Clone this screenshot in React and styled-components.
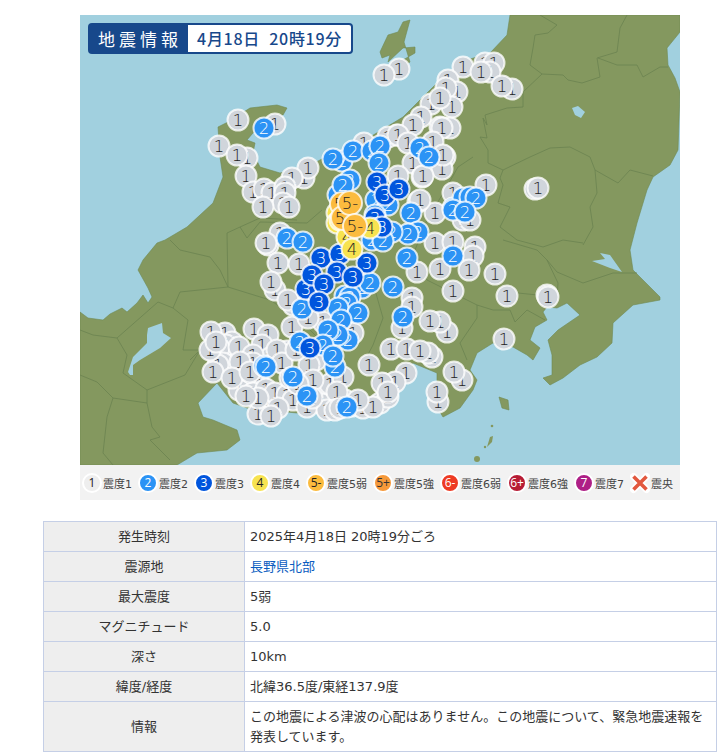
import React from 'react';
import styled, { createGlobalStyle } from 'styled-components';

const GlobalStyle = createGlobalStyle`
  html, body { margin: 0; padding: 0; background: #ffffff; overflow: hidden; }
  body { font-family: "DejaVu Sans", "Noto Sans CJK JP", sans-serif; color: #333333; font-size: 13px; }
`;

const COLORS = {
  '1': { bg: '#d0d5db', fg: '#222222' },
  '2': { bg: '#2b93f5', fg: '#ffffff' },
  '3': { bg: '#0055dd', fg: '#ffffff' },
  '4': { bg: '#f7e350', fg: '#222222' },
  '5-': { bg: '#fbbb3e', fg: '#222222' },
  '5+': { bg: '#f6993a', fg: '#333333' },
  '6-': { bg: '#ee3b23', fg: '#ffffff' },
  '6+': { bg: '#b71c35', fg: '#ffffff' },
  '7': { bg: '#ae1f86', fg: '#ffffff' },
};

const LAND = '80,312 88,318 103,320 110,314 122,308 127,312 137,303 143,295 148,303 152,297 148,288 138,270 143,260 157,243 165,240 187,227 213,203 223,177 220,157 218,127 228,122 250,108 277,105 287,108 283,115 265,120 253,133 247,140 255,143 253,153 260,167 280,173 307,167 333,153 367,147 370,137 403,117 437,83 467,60 490,53 507,35 510,15 680,15 680,32 667,48 668,65 675,78 680,92 678,150 670,165 653,177 647,190 637,223 630,250 633,270 660,297 660,300 633,305 613,323 612,343 597,357 580,365 563,378 550,385 543,378 552,375 552,355 548,340 558,330 580,315 567,303 557,308 547,307 543,312 547,320 535,327 530,340 540,348 533,360 527,355 513,347 493,343 477,353 470,370 477,380 473,390 460,408 443,417 437,407 437,373 413,363 403,370 377,393 347,413 297,413 247,408 233,403 217,383 198,403 203,417 213,420 237,430 240,440 227,450 197,453 177,465 80,465';

const SADO = '410,20 403,22 398,32 388,35 380,52 382,58 390,55 388,62 403,48 415,47 415,53 403,60 390,65 398,70 410,62 404,42';
const BIWA = '148,328 162,323 163,333 171,338 160,348 140,360 133,365 133,375 130,375 128,372 133,357 147,343 147,335';
const INAWASHIRO = '572,108 578,106 585,112 581,118 575,115';
const KASUMI = '592,261 605,259 600,253 610,255 622,272 610,268';
const OSHIMA = '499,397 508,400 509,410 502,408';
const NIIJIMA = '490,437 493,436 492,442 487,447';

const BORDERS = [
  '540,15 557,25 548,33 535,35 533,48 530,65 542,74 523,92 523,107 507,108 485,115 487,125 483,118 487,138 480,137 488,150 488,163 503,170',
  '542,74 563,75 568,80 582,83 600,77 597,58 617,52 620,28 627,15',
  '598,58 617,65 637,65 643,77 660,67 668,67',
  '503,170 530,157 550,148 570,147 590,157 595,170 618,183 630,170 653,176',
  '595,170 597,193 590,207 593,227 583,245',
  '503,170 500,178 503,185 498,203 510,207 500,227 517,240 543,247 563,240 583,243',
  '503,240 537,250 547,260 557,272 583,283 613,273 637,273',
  '547,260 558,283 557,297 543,307',
  '427,280 463,298 477,305 493,310 510,310 515,322 527,310 545,320',
  '477,305 477,318 460,343 467,360',
  '518,293 557,297',
  '473,157 458,167 445,190 427,220 415,250 427,280',
  '170,240 180,250 210,257 220,270 228,287 180,292 173,308 188,320 183,350 200,350 190,360',
  '158,302 173,308',
  '158,302 117,338 127,355 123,373 147,390 185,375 200,350',
  '80,375 97,382 113,398 147,403 147,390',
  '107,417 103,453 113,465',
  '113,398 107,417',
  '147,403 152,427 160,437 150,440 170,460',
  '93,335 117,338',
  '80,330 93,335',
  '228,287 227,233 240,227 247,238 260,222 307,223 322,210',
  '240,227 260,218 297,220',
  '375,290 383,318 373,345 365,360',
  '228,287 270,300 300,320 330,350 340,385 347,413',
];

const PINS = {
  '1': [
    [238,120],[275,124],[219,146],[247,158],[237,155],[246,176],[304,178],[308,168],[292,178],[253,192],[264,189],[272,193],[285,187],[285,193],[283,203],[289,207],[263,207],[364,143],
    [399,69],[384,75],[463,67],[485,63],[494,63],[490,72],[481,72],[512,89],[502,86],[448,80],[457,92],[446,88],[452,107],[431,104],[440,98],[421,117],[413,125],[440,127],[450,128],[442,128],[397,135],[388,137],[398,135],[408,143],[433,142],[445,157],[413,163],[442,169],[422,177],[398,176],[486,185],[535,189],[538,188],[453,193],[435,213],[418,202],[463,220],[470,220],[435,243],[453,242],[475,247],[420,200],[423,176],[443,155],
    [473,256],[440,269],[469,270],[495,274],[417,272],[453,291],[507,296],[547,295],[548,297],[412,298],[412,307],[447,332],[440,322],[430,321],[402,328],[391,349],[407,349],[432,357],[428,353],[420,351],[504,339],[462,380],[454,372],[438,402],[437,392],[406,373],[384,384],[395,382],[380,403],[388,397],
    [268,245],[280,233],[266,243],[278,263],[299,264],[275,290],[271,282],[293,305],[288,300],[225,333],[211,332],[254,329],[268,335],[292,327],[227,353],[223,350],[220,355],[228,368],[236,358],[232,342],[226,345],[219,348],[245,360],[262,345],[270,358],[239,347],[287,351],[277,350],[253,355],[223,363],[218,365],[213,372],[243,377],[253,363],[282,363],[316,360],[309,365],[260,385],[268,400],[280,402],[300,392],[318,395],[322,404],[330,384],[345,400],[352,406],[245,377],[239,390],[253,393],[266,389],[275,393],[287,395],[293,400],[278,408],[258,414],[271,416],[313,380],[343,377],[369,365],[337,392],[307,407],[327,410],[335,410],[363,408],[373,407],[382,383],[323,322],[353,333],[308,318],
    [210,350],[216,342],[240,362],[232,378],[250,372],[258,398],[246,396],[290,378],[298,384],[312,398],[340,408],[358,400],[388,392],[296,350],
  ],
  '2': [
    [264,128],[342,161],[333,159],[353,151],[372,151],[380,146],[379,163],[350,180],[338,195],[343,185],[420,148],[429,157],[411,213],[453,208],[463,198],[470,197],[476,198],[453,210],[465,212],
    [376,200],[388,205],[375,215],[385,232],[418,232],[408,234],[372,240],[392,232],[383,241],[407,258],[453,256],[287,238],[303,242],[393,287],[362,288],[370,283],[403,317],
    [302,309],[345,296],[350,297],[347,303],[338,308],[358,313],[341,320],[348,340],[338,335],[328,330],[323,345],[300,342],[335,367],[333,356],[264,366],[266,367],[293,377],[307,396],[347,407],
  ],
  '3': [
    [377,182],[385,195],[399,189],[375,218],[382,227],[321,258],[340,254],[367,263],[337,272],[353,277],[306,289],[312,275],[324,284],[319,302],[310,348],
  ],
  '4': [[337,213],[337,223],[340,220],[347,237],[370,228],[352,249]],
  '5-': [[342,204],[343,218],[350,203],[355,226]],
};

const LEGEND = [
  { level: '1', label: '震度1', dot: '#eeeeee' },
  { level: '2', label: '震度2' },
  { level: '3', label: '震度3' },
  { level: '4', label: '震度4' },
  { level: '5-', label: '震度5弱' },
  { level: '5+', label: '震度5強' },
  { level: '6-', label: '震度6弱' },
  { level: '6+', label: '震度6強' },
  { level: '7', label: '震度7' },
];

const S = {
  Page: styled.main`
    width: 674px;
    margin-left: 43px;
    padding-top: 15px;
  `,
  Figure: styled.figure`
    position: relative;
    width: 600px;
    margin: 0 auto;
  `,
  MapSvg: styled.svg`
    display: block;
    width: 600px;
    height: 450px;
  `,
  PinText: styled.text`
    font-family: "DejaVu Sans", sans-serif;
    font-size: 16.5px;
    font-weight: 200;
    text-anchor: middle;
  `,
  Banner: styled.div`
    position: absolute;
    left: 8px;
    top: 8px;
    display: flex;
    width: 265px;
    height: 31px;
    box-sizing: border-box;
    padding: 2px 2px 2px 0;
    background: #17488b;
    border-radius: 4px;
    font-family: "Noto Sans CJK JP", sans-serif;
  `,
  BannerTitle: styled.div`
    width: 100px;
    color: #ffffff;
    font-size: 17px;
    letter-spacing: 4px;
    line-height: 27px;
    text-align: center;
    padding-left: 4px;
    box-sizing: border-box;
  `,
  BannerTime: styled.div`
    flex: 1;
    background: #ffffff;
    border-radius: 0 2px 2px 0;
    color: #17488b;
    font-size: 16px;
    font-weight: 500;
    letter-spacing: 0.7px;
    word-spacing: 5px;
    line-height: 27px;
    text-align: center;
    white-space: nowrap;
  `,
  Legend: styled.ul`
    display: flex;
    align-items: center;
    height: 35px;
    margin: 0;
    padding: 0 0 0 2px;
    list-style: none;
    background: #f2f2f2;
  `,
  LegendItem: styled.li`
    display: flex;
    align-items: center;
    gap: 1px;
    margin-right: 6px;
    font-size: 11px;
    color: #444444;
    white-space: nowrap;
  `,
  LegendDot: styled.span`
    width: 16px;
    height: 16px;
    border: 2px solid #ffffff;
    border-radius: 50%;
    background: ${props => props.$bg};
    color: ${props => props.$fg};
    font-family: "Open Sans", sans-serif;
    font-size: 12px;
    line-height: 16px;
    text-align: center;
    flex: none;
  `,
  Table: styled.table`
    width: 674px;
    margin-top: 21px;
    border-collapse: collapse;
    table-layout: fixed;
  `,
  Head: styled.th`
    width: 201px;
    box-sizing: border-box;
    padding: 4.5px 5px;
    border: 1px solid #c5cfe6;
    background: #eeeeee;
    font-weight: 400;
    line-height: 20px;
    text-align: center;
  `,
  Cell: styled.td`
    padding: 4.5px 5px;
    border: 1px solid #c5cfe6;
    line-height: 20px;
  `,
  Link: styled.a`
    color: #0b5cc0;
    text-decoration: none;
  `,
};

const Pin = ({ x, y, level }) => (
  <g>
    <circle cx={x} cy={y} r={level === '5-' ? 12 : 10.5} fill={COLORS[level].bg} stroke="#ffffff" strokeOpacity={0.78} strokeWidth={2} />
    <S.PinText x={x} y={y + 6} fill={COLORS[level].fg}>{level}</S.PinText>
  </g>
);

const QuakeMap = () => (
  <S.MapSvg viewBox="80 15 600 450">
    <rect x="80" y="15" width="600" height="450" fill="#a1d0df" />
    <polygon points={LAND} fill="#84985f" stroke="#6f8a52" strokeWidth="0.6" />
    <polygon points={SADO} fill="#84985f" stroke="#6f8a52" strokeWidth="0.6" />
    <polygon points={OSHIMA} fill="#84985f" stroke="#6f8a52" strokeWidth="0.6" />
    <polygon points={NIIJIMA} fill="#84985f" />
    <circle cx="492" cy="426" r="1.3" fill="#84985f" />
    <circle cx="485" cy="447" r="1.2" fill="#84985f" />
    <circle cx="477" cy="459" r="3" fill="#84985f" />
    {[BIWA, INAWASHIRO, KASUMI].map(p => (
      <polygon key={p} points={p} fill="#a1d0df" />
    ))}
    {BORDERS.map(b => (
      <polyline key={b} points={b} fill="none" stroke="#6b8350" strokeWidth="0.8" />
    ))}
    {Object.keys(PINS).map(level =>
      PINS[level].map(([x, y], i) => <Pin key={level + i} x={x} y={y} level={level} />)
    )}
  </S.MapSvg>
);

const CrossIcon = () => (
  <svg width="20" height="22" viewBox="0 0 20 22">
    <path d="M3.5 4.5 L16.5 17.5 M16.5 4.5 L3.5 17.5" stroke="#ffffff" strokeWidth="7" strokeLinecap="round" />
    <path d="M3.5 4.5 L16.5 17.5 M16.5 4.5 L3.5 17.5" stroke="#e2583e" strokeWidth="3.6" />
  </svg>
);

const App = () => (
  <>
    <GlobalStyle />
    <S.Page>
      <S.Figure>
        <QuakeMap />
        <S.Banner>
          <S.BannerTitle>地震情報</S.BannerTitle>
          <S.BannerTime>4月18日 20時19分</S.BannerTime>
        </S.Banner>
        <S.Legend>
          {LEGEND.map(item => (
            <S.LegendItem key={item.level}>
              <S.LegendDot $bg={item.dot || COLORS[item.level].bg} $fg={COLORS[item.level].fg}>
                {item.level}
              </S.LegendDot>
              {item.label}
            </S.LegendItem>
          ))}
          <S.LegendItem>
            <CrossIcon />
            震央
          </S.LegendItem>
        </S.Legend>
      </S.Figure>
      <S.Table>
        <tbody>
          <tr><S.Head>発生時刻</S.Head><S.Cell>2025年4月18日 20時19分ごろ</S.Cell></tr>
          <tr><S.Head>震源地</S.Head><S.Cell><S.Link href="#">長野県北部</S.Link></S.Cell></tr>
          <tr><S.Head>最大震度</S.Head><S.Cell>5弱</S.Cell></tr>
          <tr><S.Head>マグニチュード</S.Head><S.Cell>5.0</S.Cell></tr>
          <tr><S.Head>深さ</S.Head><S.Cell>10km</S.Cell></tr>
          <tr><S.Head>緯度/経度</S.Head><S.Cell>北緯36.5度/東経137.9度</S.Cell></tr>
          <tr><S.Head>情報</S.Head><S.Cell>この地震による津波の心配はありません。この地震について、緊急地震速報を発表しています。</S.Cell></tr>
        </tbody>
      </S.Table>
    </S.Page>
  </>
);

export default App;
